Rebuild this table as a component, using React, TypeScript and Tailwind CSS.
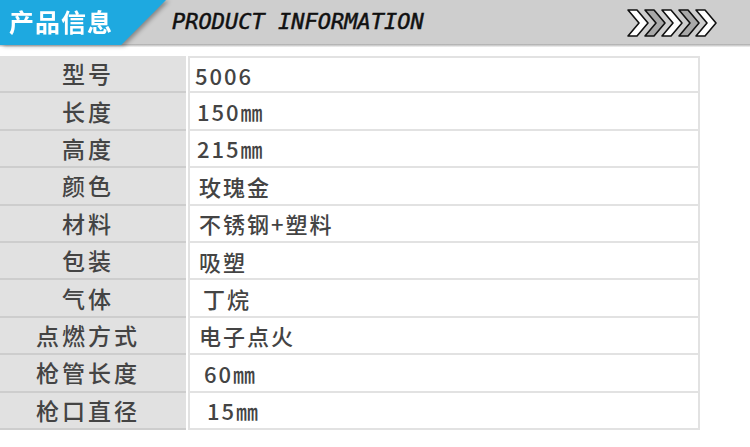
const rows: { label: string; value: string; pad: string }[] = [
  { label: '型号', value: '5006', pad: 'pl-[5px]' },
  { label: '长度', value: '150㎜', pad: 'pl-[7px]' },
  { label: '高度', value: '215㎜', pad: 'pl-[7px]' },
  { label: '颜色', value: '玫瑰金', pad: 'pl-[9px]' },
  { label: '材料', value: '不锈钢+塑料', pad: 'pl-[9px]' },
  { label: '包装', value: '吸塑', pad: 'pl-[9px]' },
  { label: '气体', value: '丁烷', pad: 'pl-[13px]' },
  { label: '点燃方式', value: '电子点火', pad: 'pl-[9px]' },
  { label: '枪管长度', value: '60㎜', pad: 'pl-[14px]' },
  { label: '枪口直径', value: '15㎜', pad: 'pl-[17px]' },
]

function Chevrons() {
  const fills = ['#ffffff', '#a8a8a8', '#ffffff', '#a8a8a8', '#ffffff']
  return (
    <svg width="98" height="30" viewBox="0 0 98 30">
      {fills.map((f, i) => (
        <polygon
          key={i}
          points={`${2 + i * 17},2 ${11 + i * 17},2 ${22 + i * 17},15 ${11 + i * 17},28 ${2 + i * 17},28 ${13 + i * 17},15`}
          fill={f}
          stroke="#111"
          strokeWidth="1.6"
          strokeLinejoin="round"
        />
      ))}
    </svg>
  )
}

export default function App() {
  return (
    <div className="w-[750px] h-[447px] bg-white overflow-hidden font-['Noto_Sans_CJK_SC',sans-serif] text-[#444]">
      <div className="flex items-center h-[44px] bg-[#cecece]">
        <div className="h-full [filter:drop-shadow(3px_1px_2px_rgba(0,0,0,0.35))]">
          <div className="h-[45px] w-[166px] bg-[#1ea9e0] [clip-path:polygon(0_0,100%_0,73%_100%,0_100%)] flex items-center pl-[9px] pb-[3px]">
            <span className="text-white text-[25px] font-bold tracking-[1px] leading-none">产品信息</span>
          </div>
        </div>
        <span className="ml-[6px] font-['DejaVu_Sans_Mono',monospace] italic text-[22px] text-[#111] leading-none pb-[1px] [-webkit-text-stroke:0.5px_#111]">
          PRODUCT INFORMATION
        </span>
        <div className="ml-auto mr-[26px] pt-[1px]">
          <Chevrons />
        </div>
      </div>
      <div className="h-[3px] bg-gradient-to-b from-[#a9a9a9] to-[#f4f4f4]" />
      <div className="mt-[9px] flex flex-col w-[700px]">
        {rows.map((r, i) => (
          <div key={i} className="flex h-[37.4px]">
            <div className="w-[186px] bg-[#e1e1e1] border-b-2 border-[#cdcdcd] flex items-center justify-center pr-[10px]">
              <span className="text-[23px] font-medium tracking-[3px] leading-none">{r.label}</span>
            </div>
            <div className={`ml-[2px] flex-1 bg-white border-2 border-t-0 ${i === 0 ? 'border-t-2' : ''} border-[#e2e2e2] flex items-center ${r.pad}`}>
              <span className="text-[22px] font-medium tracking-[2px] leading-none">{r.value}</span>
            </div>
          </div>
        ))}
      </div>
    </div>
  )
}
